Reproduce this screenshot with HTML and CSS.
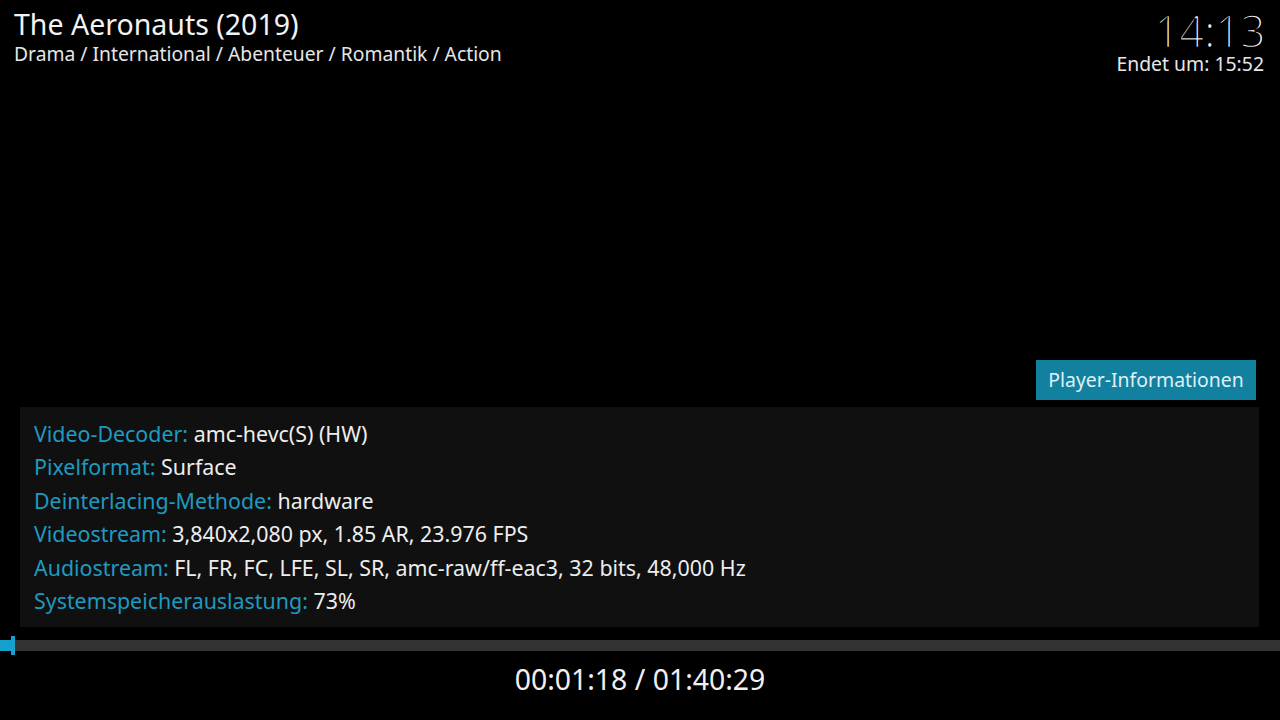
FILE: index.html
```html
<!DOCTYPE html>
<html>
	<head>
		<meta charset="utf-8">
		<title>The Aeronauts (2019)</title>
		<link rel="stylesheet" href="styles.css">
	</head>
	<body>
		<div class="screen">
			<div class="top">
				<div class="info">
					<div class="title">The Aeronauts (2019)</div>
					<div class="genre">Drama / International / Abenteuer / Romantik / Action</div>
				</div>
				<div class="clock">
					<div class="time">14:13</div>
					<div class="ends">Endet um: 15:52</div>
				</div>
			</div>

			<div class="spacer"></div>

			<div class="heading-row">
				<div class="heading">Player-Informationen</div>
			</div>
			<div class="panel">
				<div class="row"><span class="label">Video-Decoder:</span> amc-hevc(S) (HW)</div>
				<div class="row"><span class="label">Pixelformat:</span> Surface</div>
				<div class="row"><span class="label">Deinterlacing-Methode:</span> hardware</div>
				<div class="row"><span class="label">Videostream:</span> 3,840x2,080 px, 1.85 AR, 23.976 FPS</div>
				<div class="row"><span class="label">Audiostream:</span> FL, FR, FC, LFE, SL, SR, amc-raw/ff-eac3, 32 bits, 48,000 Hz</div>
				<div class="row"><span class="label">Systemspeicherauslastung:</span> 73%</div>
			</div>

			<div class="progress">
				<div class="fill" style="width: 11px;"></div>
				<div class="knob"></div>
			</div>
			<div class="position">00:01:18 / 01:40:29</div>
		</div>
	</body>
</html>
```

FILE: styles.css
```css
* {
	margin: 0;
	padding: 0;
	box-sizing: border-box;
}

body {
	background: #000;
	color: #f0f0f0;
	font-family: "Noto Sans", "Open Sans", sans-serif;
}

.screen {
	width: 1280px;
	height: 720px;
	display: flex;
	flex-direction: column;
	overflow: hidden;
}

/* top bar */
.top {
	display: flex;
	justify-content: space-between;
	padding: 5px 16px 0 14px;
}

.title {
	font-size: 28.5px;
	line-height: 39px;
	color: #f2f2f2;
}

.genre {
	font-size: 19.3px;
	line-height: 20px;
	color: #e6e6e6;
}

.clock {
	text-align: right;
}

/* thin clock digits: black outline eats into the regular weight */
.time {
	font-size: 45px;
	line-height: 38px;
	letter-spacing: -0.8px;
	color: #f0f0f0;
	-webkit-text-stroke: 2.4px #000;
	margin-top: 7px;
	margin-right: -1px;
}

.ends {
	font-size: 19.4px;
	line-height: 22px;
	margin-top: 3px;
	color: #e6e6e6;
}

.spacer {
	flex: 1;
}

/* player info */
.heading-row {
	display: flex;
	justify-content: flex-end;
	padding-right: 24px;
}

.heading {
	background: #12809f;
	color: #dff0f6;
	font-size: 19.4px;
	height: 40px;
	line-height: 40px;
	width: 220px;
	text-align: center;
}

.panel {
	background: #101010;
	margin: 7px 21px 0 20px;
	padding: 10px 14px 12px 14px;
	height: 220px;
}

.row {
	font-size: 21.4px;
	line-height: 33.4px;
	color: #ededed;
	white-space: nowrap;
}

.label {
	color: #1e9ac0;
}

/* seek bar */
.progress {
	position: relative;
	height: 11px;
	margin-top: 13px;
	background: #333;
}

.fill {
	height: 100%;
	background: #16a0cc;
}

.knob {
	position: absolute;
	left: 11px;
	top: -4px;
	width: 4px;
	height: 19px;
	background: #16a0cc;
}

.position {
	text-align: center;
	font-size: 28.4px;
	line-height: 34px;
	margin-top: 11px;
	margin-bottom: 24px;
	color: #f0f0f0;
}
```
